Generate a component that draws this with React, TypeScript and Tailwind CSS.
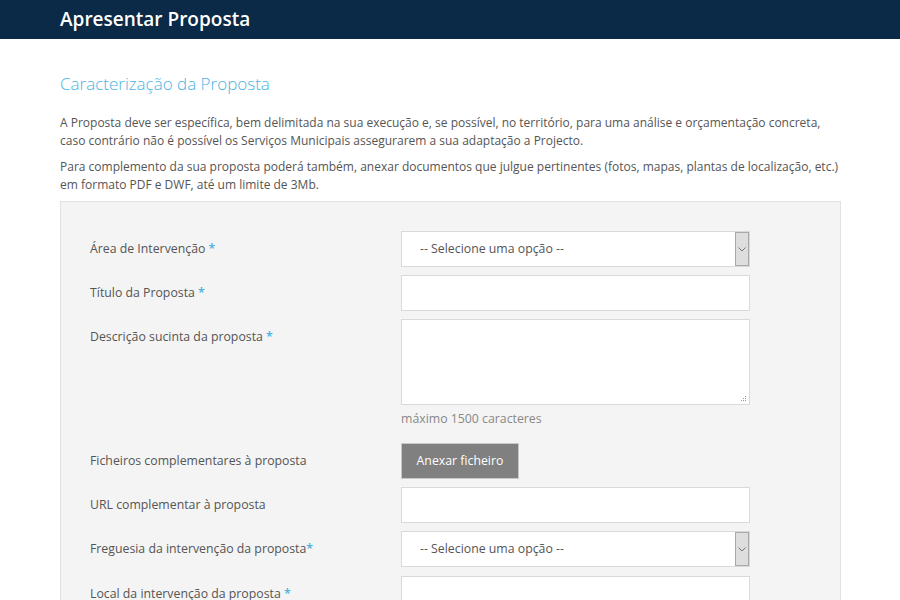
import React from 'react';

const font = { fontFamily: '"Open Sans", "Noto Sans", sans-serif' };

// Required field marker
const Req = ({ tight }: { tight?: boolean }) => (
  <>
    {tight ? '' : ' '}
    <span className="text-[#3fb0e3] font-semibold">*</span>
  </>
);

const Label: React.FC<{ children: React.ReactNode }> = ({ children }) => (
  <div className="w-[311px] shrink-0 text-[12.3px] leading-[36px] text-[#555]">{children}</div>
);

const TextInput = () => (
  <input
    type="text"
    className="w-[349px] h-[36px] bg-white border border-[#d9d9d9] outline-none px-3 text-[12.3px]"
  />
);

const SelectBox = () => (
  <div className="relative w-[349px] h-[36px] bg-white border border-[#d9d9d9] flex items-center">
    <span className="pl-[18px] text-[12.3px] text-[#555]">-- Selecione uma opção --</span>
    <div className="absolute right-0 top-0 bottom-0 w-[14px] bg-[#dedede] border border-[#a9a9a9] flex items-center justify-center">
      <svg width="8" height="5" viewBox="0 0 8 5" fill="none">
        <path d="M0.5 0.5 L4 4 L7.5 0.5" stroke="#777" strokeWidth="1" />
      </svg>
    </div>
  </div>
);

export default function App() {
  return (
    <div className="min-h-[600px] bg-white" style={font}>
      {/* Header bar */}
      <div className="h-[39px] bg-[#0a2a47] flex items-center">
        <h1 className="ml-[60px] text-white text-[19px] font-semibold leading-none">Apresentar Proposta</h1>
      </div>

      <div className="ml-[60px] w-[781px] pt-[33px]">
        <h2 className="text-[#4ab4e4] text-[17px] font-light leading-[24px] mb-[18px]">
          Caracterização da Proposta
        </h2>

        <p className="text-[12px] leading-[17.5px] text-[#555] mb-[9px]">
          A Proposta deve ser específica, bem delimitada na sua execução e, se possível, no território, para uma análise e orçamentação concreta, caso contrário não é possível os Serviços Municipais assegurarem a sua adaptação a Projecto.
        </p>
        <p className="text-[12px] leading-[17.5px] text-[#555] mb-[8px]">
          Para complemento da sua proposta poderá também, anexar documentos que julgue pertinentes (fotos, mapas, plantas de localização, etc.) em formato PDF e DWF, até um limite de 3Mb.
        </p>

        {/* Form panel */}
        <div className="bg-[#f4f4f4] border border-[#e2e2e2] pl-[29px] pt-[29px] pb-[20px]">
          <div className="flex mb-[8px]">
            <Label>Área de Intervenção<Req /></Label>
            <SelectBox />
          </div>

          <div className="flex mb-[8px]">
            <Label>Título da Proposta<Req /></Label>
            <TextInput />
          </div>

          <div className="flex">
            <Label>Descrição sucinta da proposta<Req /></Label>
            <div className="flex flex-col">
              <div className="relative">
                <textarea className="w-[349px] h-[86px] bg-white border border-[#d9d9d9] outline-none p-2 text-[12.3px] block resize-none" />
                <svg className="absolute right-[3px] bottom-[3px]" width="6" height="6" viewBox="0 0 6 6">
                  <rect x="4" y="0" width="1" height="1" fill="#999" />
                  <rect x="2" y="2" width="1" height="1" fill="#999" />
                  <rect x="4" y="2" width="1" height="1" fill="#999" />
                  <rect x="0" y="4" width="1" height="1" fill="#999" />
                  <rect x="2" y="4" width="1" height="1" fill="#999" />
                  <rect x="4" y="4" width="1" height="1" fill="#999" />
                </svg>
              </div>
              <span className="text-[12.3px] text-[#888] leading-[18px] mt-[5px]">máximo 1500 caracteres</span>
            </div>
          </div>

          <div className="flex mt-[15px] mb-[8px]">
            <Label>Ficheiros complementares à proposta</Label>
            <button className="w-[118px] h-[36px] bg-[#808080] border border-[#c8c8c8] text-white text-[12.3px]">
              Anexar ficheiro
            </button>
          </div>

          <div className="flex mb-[8px]">
            <Label>URL complementar à proposta</Label>
            <TextInput />
          </div>

          <div className="flex mb-[9px]">
            <Label>Freguesia da intervenção da proposta<Req tight /></Label>
            <SelectBox />
          </div>

          <div className="flex mb-[9px]">
            <Label>Local da intervenção da proposta<Req /></Label>
            <TextInput />
          </div>
        </div>
      </div>
    </div>
  );
}
